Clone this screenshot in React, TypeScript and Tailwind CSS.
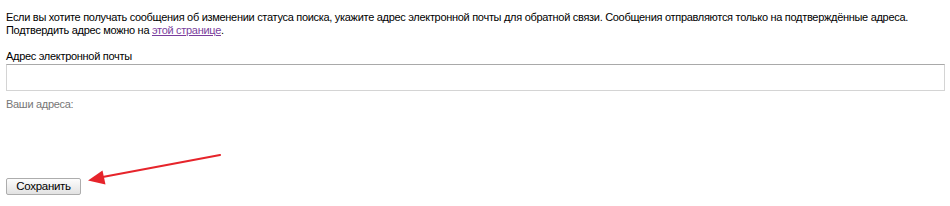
// ── Email subscription form ───────────────────────────────────────
export default function App() {
  return (
    <div className="relative h-[206px] w-[950px] overflow-hidden bg-white pl-[6px] pr-[5px] pt-[11px] font-['Liberation_Sans',Arial,sans-serif] text-[11px] leading-[13px] tracking-[-0.3px] text-black">
      {/* Intro */}
      <p>
        Если вы хотите получать сообщения об изменении статуса поиска, укажите адрес электронной почты для обратной связи.
        Сообщения отправляются только на подтверждённые адреса.
        <br />
        Подтвердить адрес можно на{" "}
        <a href="#" className="text-[#7a3e9d] underline">
          этой странице
        </a>
        .
      </p>

      {/* Email field */}
      <label className="mt-[13px] block">Адрес электронной почты</label>
      <input
        type="text"
        className="mt-[1px] block h-[27px] w-full border border-[#d4d4d4] border-t-[#a9a9a9] bg-white px-1 outline-none"
      />
      <div className="mt-[7px] text-[#777]">Ваши адреса:</div>

      {/* Save */}
      <button className="mt-[67px] h-[17px] w-[75px] rounded-[2px] border border-[#adadad] bg-gradient-to-b from-[#fdfdfd] to-[#e2e2e2] text-[11.5px] leading-[15px] text-black">
        Сохранить
      </button>

      {/* Annotation arrow */}
      <svg className="absolute left-0 top-0" width="950" height="206" viewBox="0 0 950 206">
        <line x1="220" y1="155" x2="100" y2="177.5" stroke="#e6242b" strokeWidth="2.2" strokeLinecap="round" />
        <polygon points="88,180.5 102.5,170.5 105.5,184.5" fill="#e6242b" />
      </svg>
    </div>
  );
}
